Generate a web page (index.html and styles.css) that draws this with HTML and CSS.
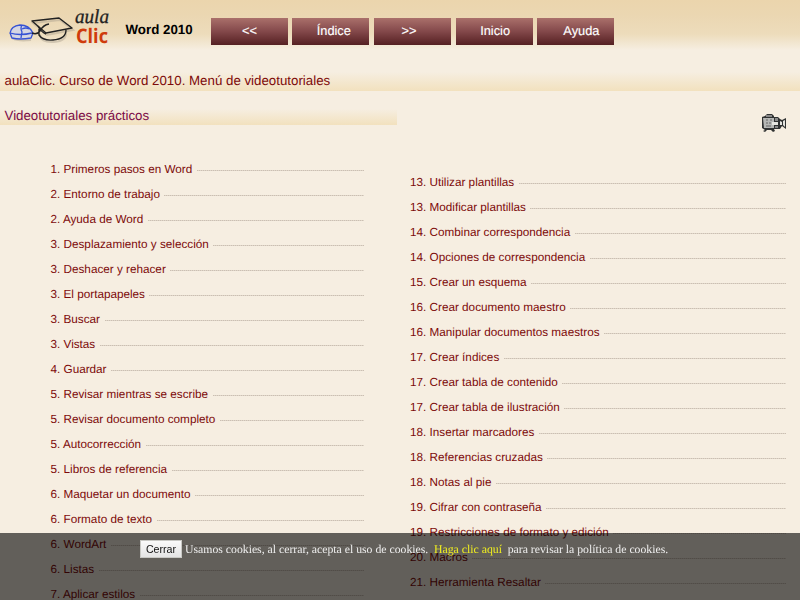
FILE: index.html
```html
<!DOCTYPE html>
<html lang="es">
<head>
<meta charset="utf-8">
<title>aulaClic. Curso de Word 2010. Menú de videotutoriales</title>
<link rel="stylesheet" href="styles.css">
</head>
<body>
<header class="top">
  <svg class="logo" width="116" height="50" viewBox="0 0 116 50" role="img" aria-label="aulaClic">
    <g fill="none" stroke="#aaa08e" stroke-width="2" opacity=".45" transform="translate(1 2)">
      <path d="M32 21L59 18L72 28L46 33ZM39 32Q39 41 53 40Q66 39 65 30M10 34Q12 40 30 38"/>
    </g>
    <g fill="#d5d6e2" stroke="#3552d4" stroke-width="1.3" stroke-linejoin="round">
      <path d="M10 33Q11 26 20 25Q29 25 33 33L31 38Q20 40 12 38Z"/>
      <path fill="none" d="M10 33Q20 36 32 33M22 25Q20 28 22 32L21 38M22 29Q26 27 29 29"/>
    </g>
    <g fill="none" stroke="#222" stroke-width="1.4" stroke-linejoin="round">
      <path d="M32 21L59 18L72 28L46 33Z"/>
      <path d="M39 29V35Q43 41 53 40Q66 39 66 30M32 33Q37 35 40 31Q43 25 49 24M38 26Q41 32 46 34"/>
    </g>
    <text class="logo-aula" x="75" y="23" textLength="34" lengthAdjust="spacingAndGlyphs">aula</text>
    <text class="logo-clic" x="76" y="43" textLength="32" lengthAdjust="spacingAndGlyphs">Clic</text>
  </svg>
  <strong class="course">Word 2010</strong>
  <nav class="nav">
    <a class="btn">&lt;&lt;</a>
    <a class="btn indent">Índice</a>
    <a class="btn back">&gt;&gt;</a>
    <a class="btn home">Inicio</a>
    <a class="btn indent">Ayuda</a>
  </nav>
</header>
<h1 class="title">aulaClic. Curso de Word 2010. Menú de videotutoriales</h1>
<div class="section">
  <h2 class="subtitle">Videotutoriales prácticos</h2>
  <svg class="camera" width="25" height="20" viewBox="0 0 25 20" aria-hidden="true">
    <path d="M3 3L5 1H10L12 3V4H16L18 6L20 7L24 5V16L20 13L18 16H12L13 18L11 19L9 17H5L3 19L1 18L3 17L0 15V4Z" fill="#303232"/>
    <path d="M1 5H12V15H2Z" fill="#b6b7b5"/>
    <path d="M4 2H10V4H4ZM13 5H16V8H13ZM13 13H16V15H13Z" fill="#888"/>
    <path d="M10 9H16V12H10ZM18 8L20 9V12H18ZM21 8L23 7V14L21 12Z" fill="#e5e5e0"/>
    <path d="M4 7H6M8 7H10M4 10H6M7 10H9M4 13H9" stroke="#666"/>
  </svg>
</div>
<main class="columns">
  <ul class="list left">
    <li><a>1. Primeros pasos en Word</a></li>
    <li><a>2. Entorno de trabajo</a></li>
    <li><a>2. Ayuda de Word</a></li>
    <li><a>3. Desplazamiento y selección</a></li>
    <li><a>3. Deshacer y rehacer</a></li>
    <li><a>3. El portapapeles</a></li>
    <li><a>3. Buscar</a></li>
    <li><a>3. Vistas</a></li>
    <li><a>4. Guardar</a></li>
    <li><a>5. Revisar mientras se escribe</a></li>
    <li><a>5. Revisar documento completo</a></li>
    <li><a>5. Autocorrección</a></li>
    <li><a>5. Libros de referencia</a></li>
    <li><a>6. Maquetar un documento</a></li>
    <li><a>6. Formato de texto</a></li>
    <li><a>6. WordArt</a></li>
    <li><a>6. Listas</a></li>
    <li><a>7. Aplicar estilos</a></li>
  </ul>
  <ul class="list right">
    <li><a>13. Utilizar plantillas</a></li>
    <li><a>13. Modificar plantillas</a></li>
    <li><a>14. Combinar correspondencia</a></li>
    <li><a>14. Opciones de correspondencia</a></li>
    <li><a>15. Crear un esquema</a></li>
    <li><a>16. Crear documento maestro</a></li>
    <li><a>16. Manipular documentos maestros</a></li>
    <li><a>17. Crear índices</a></li>
    <li><a>17. Crear tabla de contenido</a></li>
    <li><a>17. Crear tabla de ilustración</a></li>
    <li><a>18. Insertar marcadores</a></li>
    <li><a>18. Referencias cruzadas</a></li>
    <li><a>18. Notas al pie</a></li>
    <li><a>19. Cifrar con contraseña</a></li>
    <li><a>19. Restricciones de formato y edición</a></li>
    <li><a>20. Macros</a></li>
    <li><a>21. Herramienta Resaltar</a></li>
  </ul>
</main>
<div class="cookies">
  <button class="close">Cerrar</button>
  <span class="notice">Usamos cookies, al cerrar, acepta el uso de cookies.</span>
  <a class="policy">Haga clic aquí</a>
  <span class="rest">para revisar la política de cookies.</span>
</div>
</body>
</html>
```
FILE: styles.css
```css
* { box-sizing: border-box; }
body {
  margin: 0;
  height: 600px;
  overflow: hidden;
  background: #f6eee1;
  color: #7d0a0a;
  font-family: "Liberation Sans", Arial, sans-serif;
  text-rendering: geometricPrecision;
}
.top {
  display: flex;
  height: 60px;
  background: linear-gradient(#ebd5ad 0, #ebd7b2 16px, #eddcbb 34px, #f6eee1 50px);
}
.logo { flex: none; }
.logo-aula { font: italic 20px "Liberation Serif", serif; fill: #222; stroke: #222; stroke-width: .3; }
.logo-clic { font: bold 20px "Open Sans", sans-serif; fill: #cf3b0c; }
.course { width: 95px; padding-left: 9.5px; color: #000; font-size: 13.33px; line-height: 59px; white-space: nowrap; }
.nav { display: flex; gap: 4.3px; padding-top: 18px; }
.btn {
  width: 77px;
  height: 27px;
  background: linear-gradient(#aa706b, #83484a 50%, #552022);
  color: #fff;
  font-size: 12.8px;
  line-height: 26px;
  text-align: center;
  -webkit-text-stroke: .15px #fff;
}
.indent { padding-left: 6px; }
.indent:last-child { padding-left: 11px; }
.back { padding-right: 6px; }
.home { margin-left: 1.2px; padding-left: 1px; }
.title, .subtitle { margin: 0; font-weight: normal; font-size: 13.3px; white-space: nowrap; }
.title {
  height: 31px;
  padding-left: 4.5px;
  line-height: 42px;
  background: linear-gradient(#f6eee1 12px, #f2e1be);
}
.section { display: flex; justify-content: space-between; height: 68px; padding-top: 10px; }
.subtitle {
  width: 397px;
  height: 24px;
  padding-left: 4.5px;
  line-height: 29px;
  color: #7a0a48;
  background: linear-gradient(#f6eee1 8px, #f2e1be);
}
.camera { margin: 12px 13.5px 0 0; }
.columns { display: flex; }
.list { margin: 0; padding: 0; list-style: none; font-size: 11.72px; }
.left { width: 313.5px; margin: -2px 0 0 50.5px; }
.right { width: 376px; margin: 11px 0 0 46px; }
.list li { display: flex; height: 25px; line-height: 25px; white-space: nowrap; }
.list li::after {
  content: "";
  flex: 1;
  height: 1px;
  margin: 13px 0 0 4.5px;
  background: repeating-linear-gradient(90deg, #cbbfb2 0 1px, #ded5c8 1px 2px);
}
.cookies {
  position: fixed;
  inset: auto 0 0;
  display: flex;
  height: 67px;
  padding: 7px 0 0 140px;
  background: rgba(0, 0, 0, .6);
  color: #eee;
  font: 11.75px/19px "Liberation Serif", serif;
  white-space: nowrap;
}
.close {
  width: 42px;
  height: 18px;
  margin-right: 3px;
  padding: 0;
  border: 1px solid #c8c8c4;
  background: linear-gradient(#fafafa, #e4e4e4);
  color: #111;
  font: 10.67px/17px "Liberation Sans", sans-serif;
}
.policy { margin: 0 5.8px; color: #f0ee1e; }
```
